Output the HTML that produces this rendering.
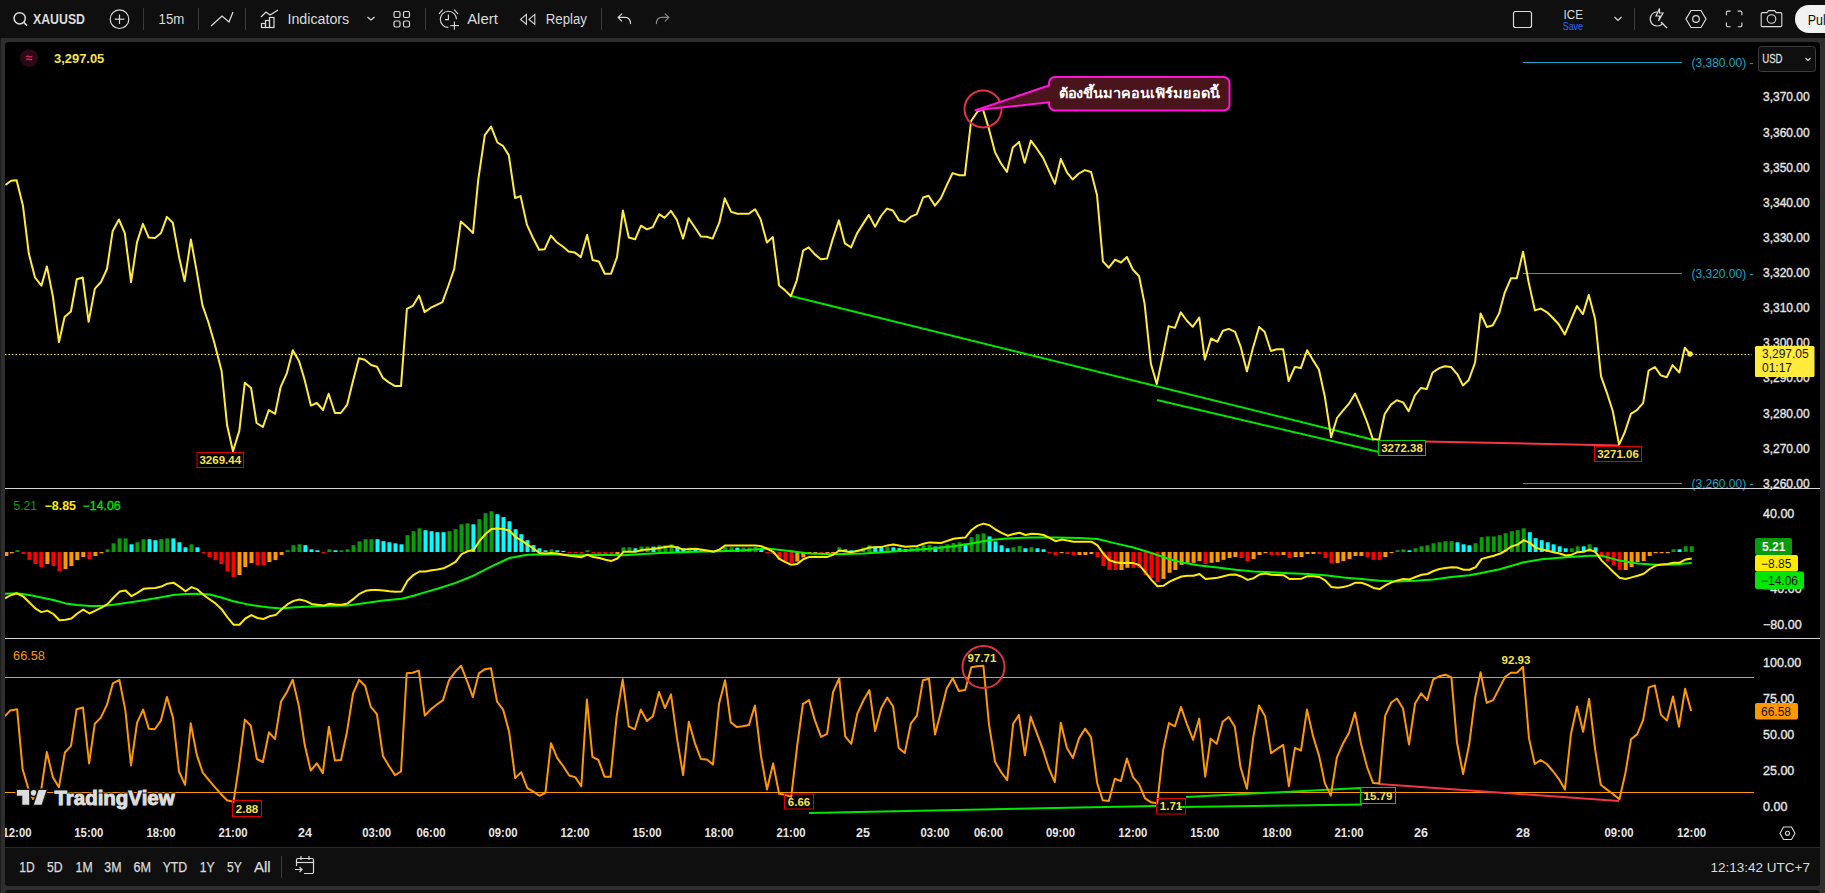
<!DOCTYPE html>
<html><head><meta charset="utf-8"><title>XAUUSD chart</title>
<style>
html,body{margin:0;padding:0;background:#2e2e2e;width:1825px;height:893px;overflow:hidden}
svg{display:block}
text{font-family:"Liberation Sans", sans-serif}
</style></head><body>
<svg width="1825" height="893" viewBox="0 0 1825 893">

<rect x="0" y="0" width="1825" height="893" fill="#2e2e2e"/>
<rect x="0" y="0" width="1825" height="38" fill="#0f0f0f"/>
<rect x="5" y="42" width="1815" height="844" rx="4" fill="#000"/>
<rect x="5" y="847" width="1815" height="39" rx="4" fill="#0f0f0f"/>
<rect x="5" y="847" width="1815" height="8" fill="#0f0f0f"/>
<line x1="5" y1="847.5" x2="1820" y2="847.5" stroke="#2a2a2a" stroke-width="1"/>
<rect x="5" y="890" width="1815" height="8" rx="4" fill="#0f0f0f"/>
<g fill="none" stroke="#dbdbdb" stroke-width="1.5"><circle cx="19.7" cy="18.3" r="5.6"/><line x1="23.8" y1="22.4" x2="27" y2="25.6"/></g>
<text x="33" y="24" font-size="14" font-weight="bold" fill="#dbdbdb" textLength="52" lengthAdjust="spacingAndGlyphs">XAUUSD</text>
<g fill="none" stroke="#dbdbdb" stroke-width="1.2"><circle cx="119.5" cy="19.2" r="9.3"/><line x1="119.5" y1="14.5" x2="119.5" y2="24"/><line x1="114.8" y1="19.2" x2="124.3" y2="19.2"/></g>
<line x1="143.5" y1="8" x2="143.5" y2="30" stroke="#3a3a3a" stroke-width="1"/>
<line x1="198.5" y1="8" x2="198.5" y2="30" stroke="#3a3a3a" stroke-width="1"/>
<line x1="245.5" y1="8" x2="245.5" y2="30" stroke="#3a3a3a" stroke-width="1"/>
<line x1="425.5" y1="8" x2="425.5" y2="30" stroke="#3a3a3a" stroke-width="1"/>
<line x1="601.5" y1="8" x2="601.5" y2="30" stroke="#3a3a3a" stroke-width="1"/>
<line x1="1634.5" y1="8" x2="1634.5" y2="30" stroke="#3a3a3a" stroke-width="1"/>
<text x="158.6" y="24.3" font-size="14" fill="#dbdbdb" textLength="25.8" lengthAdjust="spacingAndGlyphs">15m</text>
<polyline points="211,26 222,16 229,22 233,12" fill="none" stroke="#dbdbdb" stroke-width="1.3"/>
<g fill="none" stroke="#dbdbdb" stroke-width="1.2"><polyline points="261,17 266,12 270,15 278,10"/><rect x="261.5" y="23.5" width="4" height="4"/><rect x="265.5" y="20.5" width="4" height="7"/><rect x="269.5" y="17.5" width="4.5" height="10"/></g>
<text x="287.5" y="24.3" font-size="14" fill="#dbdbdb" textLength="61.7" lengthAdjust="spacingAndGlyphs">Indicators</text>
<polyline points="367.5,17 371,20 374.5,17" fill="none" stroke="#dbdbdb" stroke-width="1.2"/>
<g fill="none" stroke="#dbdbdb" stroke-width="1.2"><rect x="394" y="11.5" width="6" height="6" rx="1.5"/><rect x="403.5" y="11.5" width="6" height="6" rx="1.5"/><rect x="394" y="21" width="6" height="6" rx="1.5"/><rect x="403.5" y="21" width="6" height="6" rx="1.5"/></g>
<g fill="none" stroke="#dbdbdb" stroke-width="1.1"><path d="M456.5,19.3 A8.1,8.1 0 1 0 448.4,27.4"/><polyline points="448.4,14.5 448.4,19.6 445,19.6"/><line x1="439" y1="13.9" x2="442.7" y2="9.6"/><line x1="454.1" y1="9.6" x2="458" y2="13.9"/><line x1="454.4" y1="21.4" x2="454.4" y2="29.8"/><line x1="450.2" y1="25.6" x2="458.9" y2="25.6"/></g>
<text x="467.2" y="24.3" font-size="14" fill="#dbdbdb" textLength="30.6" lengthAdjust="spacingAndGlyphs">Alert</text>
<g fill="none" stroke="#dbdbdb" stroke-width="1.1"><polygon points="520.6,19.4 526.4,14.4 526.4,24.4"/><polygon points="529,19.4 534.8,14.4 534.8,24.4"/></g>
<text x="545.8" y="24.3" font-size="14" fill="#dbdbdb" textLength="41.2" lengthAdjust="spacingAndGlyphs">Replay</text>
<g fill="none" stroke="#dbdbdb" stroke-width="1.1" stroke-linecap="round"><path d="M618,17.4 L621.8,13.8 M618,17.4 L621.8,21.1 M618,17.4 H625 Q630.5,17.4 630.5,23.6"/></g>
<g fill="none" stroke="#8a8a8a" stroke-width="1.1" stroke-linecap="round"><path d="M668.9,17.4 L665.1,13.8 M668.9,17.4 L665.1,21.1 M668.9,17.4 H661.9 Q656.4,17.4 656.4,23.6"/></g>
<rect x="1513.5" y="11.5" width="18" height="16" rx="2" fill="none" stroke="#dbdbdb" stroke-width="1.2"/>
<text x="1563.6" y="19" font-size="13" fill="#dbdbdb" textLength="19.4" lengthAdjust="spacingAndGlyphs">ICE</text>
<text x="1562.7" y="30.3" font-size="10.5" fill="#2f6bff" textLength="20.3" lengthAdjust="spacingAndGlyphs">Save</text>
<polyline points="1614.5,17 1618,20.5 1621.5,17" fill="none" stroke="#dbdbdb" stroke-width="1.2"/>
<g fill="none" stroke="#dbdbdb" stroke-width="1.2"><path d="M1657,12 A7,7 0 1 0 1663,23"/><line x1="1661" y1="22" x2="1667" y2="28"/><path d="M1659.5,8.5 L1656,16 L1660,16 L1658.5,21 L1663,13 L1659.5,13 Z"/></g>
<g fill="none" stroke="#dbdbdb" stroke-width="1.2"><polygon points="1691,10.5 1701,10.5 1706,19 1701,27.5 1691,27.5 1686,19"/><circle cx="1696" cy="19" r="3.3"/></g>
<g fill="none" stroke="#dbdbdb" stroke-width="1.1"><path d="M1726.4,15.2 V12.6 A1.5,1.5 0 0 1 1727.9,11.1 H1730.6 M1737.7,11.1 H1740.4 A1.5,1.5 0 0 1 1741.9,12.6 V15.2 M1741.9,22.6 V25.2 A1.5,1.5 0 0 1 1740.4,26.7 H1737.7 M1730.6,26.7 H1727.9 A1.5,1.5 0 0 1 1726.4,25.2 V22.6"/></g>
<g fill="none" stroke="#dbdbdb" stroke-width="1.1"><path d="M1762.4,12.6 H1767 L1768.6,10.6 H1774.6 L1776.2,12.6 H1780.6 A1.2,1.2 0 0 1 1781.8,13.8 V25.4 A1.2,1.2 0 0 1 1780.6,26.6 H1762.4 A1.2,1.2 0 0 1 1761.2,25.4 V13.8 A1.2,1.2 0 0 1 1762.4,12.6 Z"/><circle cx="1771.5" cy="19" r="4.3"/></g>
<rect x="1795" y="5" width="60" height="28" rx="14" fill="#f2f2f2"/>
<text x="1807.7" y="24.5" font-size="14.5" fill="#0f0f0f" textLength="18" lengthAdjust="spacingAndGlyphs">Pul</text>
<circle cx="29" cy="58" r="9" fill="#2a0a16"/>
<text x="29" y="62" font-size="12" font-weight="bold" fill="#e91e63" text-anchor="middle">≈</text>
<text x="54" y="62.7" font-size="12" font-weight="bold" fill="#f6e34a" textLength="50.3" lengthAdjust="spacingAndGlyphs">3,297.05</text>
<line x1="1523" y1="62.5" x2="1682" y2="62.5" stroke="#17a8c4" stroke-width="1"/>
<text x="1691.5" y="67.0" font-size="12" fill="#17a8c4" textLength="62" lengthAdjust="spacingAndGlyphs">(3,380.00) -</text>
<line x1="1523" y1="273.5" x2="1682" y2="273.5" stroke="#17a8c4" stroke-width="1"/>
<text x="1691.5" y="278.0" font-size="12" fill="#17a8c4" textLength="62" lengthAdjust="spacingAndGlyphs">(3,320.00) -</text>
<line x1="1523" y1="483.5" x2="1682" y2="483.5" stroke="#17a8c4" stroke-width="1"/>
<text x="1691.5" y="488.0" font-size="12" fill="#17a8c4" textLength="62" lengthAdjust="spacingAndGlyphs">(3,260.00) -</text>
<line x1="5" y1="354.5" x2="1752" y2="354.5" stroke="#ffeb3b" stroke-width="1" stroke-dasharray="1.5,2"/>
<text x="1763" y="101.4" font-size="12.5" fill="#e6e6e6" stroke="#e6e6e6" stroke-width="0.35" textLength="46.6" lengthAdjust="spacingAndGlyphs">3,370.00</text>
<text x="1763" y="136.5" font-size="12.5" fill="#e6e6e6" stroke="#e6e6e6" stroke-width="0.35" textLength="46.6" lengthAdjust="spacingAndGlyphs">3,360.00</text>
<text x="1763" y="171.7" font-size="12.5" fill="#e6e6e6" stroke="#e6e6e6" stroke-width="0.35" textLength="46.6" lengthAdjust="spacingAndGlyphs">3,350.00</text>
<text x="1763" y="206.8" font-size="12.5" fill="#e6e6e6" stroke="#e6e6e6" stroke-width="0.35" textLength="46.6" lengthAdjust="spacingAndGlyphs">3,340.00</text>
<text x="1763" y="241.9" font-size="12.5" fill="#e6e6e6" stroke="#e6e6e6" stroke-width="0.35" textLength="46.6" lengthAdjust="spacingAndGlyphs">3,330.00</text>
<text x="1763" y="277.1" font-size="12.5" fill="#e6e6e6" stroke="#e6e6e6" stroke-width="0.35" textLength="46.6" lengthAdjust="spacingAndGlyphs">3,320.00</text>
<text x="1763" y="312.2" font-size="12.5" fill="#e6e6e6" stroke="#e6e6e6" stroke-width="0.35" textLength="46.6" lengthAdjust="spacingAndGlyphs">3,310.00</text>
<text x="1763" y="347.3" font-size="12.5" fill="#e6e6e6" stroke="#e6e6e6" stroke-width="0.35" textLength="46.6" lengthAdjust="spacingAndGlyphs">3,300.00</text>
<text x="1763" y="382.4" font-size="12.5" fill="#e6e6e6" stroke="#e6e6e6" stroke-width="0.35" textLength="46.6" lengthAdjust="spacingAndGlyphs">3,290.00</text>
<text x="1763" y="417.6" font-size="12.5" fill="#e6e6e6" stroke="#e6e6e6" stroke-width="0.35" textLength="46.6" lengthAdjust="spacingAndGlyphs">3,280.00</text>
<text x="1763" y="452.7" font-size="12.5" fill="#e6e6e6" stroke="#e6e6e6" stroke-width="0.35" textLength="46.6" lengthAdjust="spacingAndGlyphs">3,270.00</text>
<text x="1763" y="487.8" font-size="12.5" fill="#e6e6e6" stroke="#e6e6e6" stroke-width="0.35" textLength="46.6" lengthAdjust="spacingAndGlyphs">3,260.00</text>
<rect x="1758.5" y="46.5" width="57" height="25" rx="3" fill="#0f0f0f" stroke="#3c3c3c" stroke-width="1"/>
<text x="1762.2" y="63" font-size="12.5" fill="#dbdbdb" stroke="#dbdbdb" stroke-width="0.3" textLength="20.4" lengthAdjust="spacingAndGlyphs">USD</text>
<polyline points="1805.5,58 1808,60.5 1810.5,58" fill="none" stroke="#dbdbdb" stroke-width="1.1"/>
<line x1="791" y1="296" x2="1374" y2="440" stroke="#00e600" stroke-width="2"/>
<line x1="1157" y1="400" x2="1379" y2="452" stroke="#00e600" stroke-width="2"/>
<line x1="1425" y1="441.5" x2="1619" y2="445.5" stroke="#f23645" stroke-width="2"/>
<polyline points="5.5,185.0 11.0,180.7 16.6,180.3 22.9,205.4 28.8,253.5 35.0,277.5 41.4,285.6 46.9,266.4 52.8,296.0 59.0,342.0 64.6,317.0 70.9,311.5 76.8,279.3 82.7,277.5 88.6,321.8 94.9,288.6 100.8,282.3 107.0,269.0 112.6,231.3 118.9,219.5 124.8,233.1 131.1,282.0 137.0,242.4 142.9,223.9 148.8,237.6 155.0,238.0 161.0,233.0 166.9,216.9 172.8,222.8 179.1,257.2 184.6,281.2 190.9,239.4 196.8,271.9 202.4,305.2 208.3,322.0 214.2,342.2 221.6,371.0 227.1,425.3 233.0,451.2 239.3,430.9 244.8,382.7 251.1,388.0 256.6,423.0 262.9,427.0 268.8,410.0 275.1,413.8 280.6,387.2 286.9,373.1 292.8,350.2 299.1,361.3 304.6,379.8 310.9,405.6 316.8,403.0 323.1,410.0 328.6,393.8 334.9,413.0 340.8,413.0 347.1,404.9 352.6,382.4 358.9,358.3 364.8,359.8 371.1,365.0 377.0,366.8 382.9,377.9 388.8,382.4 395.1,386.1 401.0,386.1 406.9,308.8 412.8,305.9 419.1,295.5 424.6,312.1 430.9,307.7 436.8,304.8 442.4,302.2 448.3,286.0 454.2,268.9 460.8,221.6 467.0,227.0 473.0,233.1 478.2,180.2 484.8,135.1 491.1,126.6 497.4,142.5 502.9,145.8 508.8,155.1 515.1,198.0 520.6,196.1 526.9,224.6 532.8,237.5 539.1,249.7 544.6,249.3 550.9,235.6 556.8,242.3 563.1,246.7 568.6,251.5 574.9,252.6 580.8,257.1 587.1,234.9 592.6,260.0 598.9,261.5 604.8,273.7 611.1,273.7 617.0,257.1 622.9,210.5 628.8,237.5 635.1,239.3 641.0,225.7 646.9,229.4 652.8,227.1 659.1,214.2 664.6,217.9 670.9,210.9 676.8,219.8 683.1,238.6 688.6,218.3 694.9,227.5 700.8,236.4 706.7,236.8 712.6,238.6 719.3,222.7 724.8,198.3 731.1,211.9 737.4,213.8 742.9,213.8 748.8,213.8 755.1,209.3 760.6,219.3 766.9,242.6 772.8,237.1 779.1,285.5 784.6,289.9 790.9,296.2 796.8,280.3 803.1,250.7 808.6,247.4 814.9,254.4 820.8,259.2 827.1,258.5 832.6,239.6 838.9,220.4 844.8,243.3 851.1,247.4 857.0,233.4 862.9,224.1 868.8,214.9 875.1,226.7 881.0,216.0 886.9,208.6 892.8,210.5 899.1,220.4 904.6,221.9 910.9,216.7 916.8,214.1 923.1,197.5 928.6,195.7 934.9,205.6 940.8,198.3 946.7,185.3 952.6,173.1 959.3,175.3 964.8,175.3 971.1,121.0 977.4,111.7 982.9,109.2 988.8,128.4 995.1,152.4 1000.6,162.7 1006.9,172.0 1012.8,147.6 1019.1,142.0 1024.6,162.7 1030.9,140.6 1036.8,148.7 1043.1,157.9 1048.6,170.1 1054.9,183.8 1060.8,159.0 1067.1,172.7 1072.6,179.4 1078.9,173.5 1084.8,170.1 1091.1,172.0 1097.0,194.9 1102.9,261.4 1108.8,267.7 1115.1,259.6 1121.0,262.5 1126.9,257.0 1132.8,269.5 1139.1,276.2 1144.6,303.9 1150.9,363.8 1156.8,384.1 1163.1,353.8 1168.6,326.1 1174.9,327.9 1180.8,312.4 1186.7,320.5 1192.6,326.8 1199.3,317.6 1204.8,359.6 1211.1,338.5 1217.4,341.8 1222.9,330.7 1228.8,328.9 1235.1,331.8 1240.6,346.6 1246.9,371.4 1252.8,348.5 1259.1,327.0 1264.6,331.8 1270.9,351.0 1276.8,349.2 1283.1,349.2 1288.6,381.0 1294.9,367.0 1300.8,368.1 1307.1,350.3 1312.6,359.6 1318.9,369.5 1324.8,396.5 1331.1,437.2 1337.0,418.0 1342.9,410.6 1348.8,403.9 1355.1,393.6 1361.0,406.9 1366.9,421.6 1372.8,439.0 1379.1,439.7 1384.6,414.2 1390.9,404.6 1396.8,400.2 1403.1,402.4 1408.6,411.3 1414.9,395.4 1420.8,388.0 1426.7,389.1 1432.6,372.5 1439.3,368.1 1444.8,366.2 1451.1,367.0 1457.4,374.3 1462.9,385.4 1468.8,379.9 1475.1,362.5 1480.6,313.4 1486.9,327.0 1492.8,325.2 1499.1,313.4 1504.6,293.0 1510.9,278.3 1516.8,278.3 1523.1,251.6 1528.6,282.0 1534.9,310.4 1540.8,308.6 1547.1,312.3 1552.6,317.8 1558.9,324.5 1564.8,334.4 1571.1,319.6 1577.0,306.0 1582.9,314.1 1588.8,294.9 1595.1,318.9 1601.0,376.2 1606.9,392.8 1612.8,411.3 1619.1,444.6 1624.6,432.7 1630.9,413.9 1636.8,410.2 1643.1,403.2 1648.6,370.6 1654.9,367.0 1660.8,375.4 1666.7,377.3 1672.6,365.1 1679.3,372.5 1684.8,347.7 1690.0,354.0" fill="none" stroke="#ffeb3b" stroke-width="2" stroke-linejoin="round"/>
<circle cx="1690" cy="354" r="2.8" fill="#ffeb3b"/>
<rect x="197.0" y="452.5" width="46.5" height="15" fill="none" stroke="#e00000" stroke-width="1"/>
<text x="220.25" y="464.2" font-size="11.5" font-weight="bold" fill="#f6e34a" text-anchor="middle">3269.44</text>
<rect x="1378.5" y="440.5" width="47" height="15" fill="none" stroke="#00d000" stroke-width="1"/>
<text x="1402.0" y="452.2" font-size="11.5" font-weight="bold" fill="#f6e34a" text-anchor="middle">3272.38</text>
<rect x="1594.5" y="446.5" width="47" height="15" fill="none" stroke="#e00000" stroke-width="1"/>
<text x="1618.0" y="458.2" font-size="11.5" font-weight="bold" fill="#f6e34a" text-anchor="middle">3271.06</text>
<circle cx="983" cy="109" r="18.5" fill="none" stroke="#e2324a" stroke-width="2"/>
<path d="M1055,77 H1223.5 A6,6 0 0 1 1229.5,83 V104.5 A6,6 0 0 1 1223.5,110.5 H1055 A6,6 0 0 1 1049,104.5 V102.3 L975.5,110.3 L1049,85.5 V83 A6,6 0 0 1 1055,77 Z" fill="#4a141c" stroke="#ff14dc" stroke-width="2" stroke-linejoin="round"/>
<text x="1058.6" y="98" font-size="13" font-weight="bold" fill="#ffffff" textLength="161" lengthAdjust="spacingAndGlyphs">ต้องขึ้นมาคอนเฟิร์มยอดนี้</text>
<rect x="1755" y="346" width="59.5" height="31" rx="1.5" fill="#ffeb3b"/>
<text x="1762" y="358" font-size="12" fill="#131313">3,297.05</text>
<text x="1762" y="372" font-size="12" fill="#131313">01:17</text>
<line x1="5" y1="488.5" x2="1820" y2="488.5" stroke="#d6d6d6" stroke-width="1"/>
<line x1="5" y1="638.5" x2="1820" y2="638.5" stroke="#d6d6d6" stroke-width="1"/>
<text x="13.4" y="509.8" font-size="12" fill="#0c9c0c" textLength="23.6" lengthAdjust="spacingAndGlyphs">5.21</text>
<text x="44.5" y="509.8" font-size="12" font-weight="bold" fill="#ffeb00" textLength="31.5" lengthAdjust="spacingAndGlyphs">−8.85</text>
<text x="82.6" y="509.8" font-size="12" fill="#00e600" stroke="#00e600" stroke-width="0.3" textLength="38" lengthAdjust="spacingAndGlyphs">−14.06</text>
<rect x="4.4" y="552.0" width="4" height="4.0" fill="#ff9800"/>
<rect x="9.8" y="552.0" width="4" height="1.3" fill="#ff9800"/>
<rect x="15.5" y="550.2" width="4" height="1.8" fill="#089c08"/>
<rect x="21.5" y="552.0" width="4" height="2.0" fill="#ff0000"/>
<rect x="27.4" y="552.0" width="4" height="7.9" fill="#ff0000"/>
<rect x="33.3" y="552.0" width="4" height="12.1" fill="#ff0000"/>
<rect x="39.3" y="552.0" width="4" height="15.1" fill="#ff0000"/>
<rect x="45.4" y="552.0" width="4" height="12.1" fill="#ff9800"/>
<rect x="51.4" y="552.0" width="4" height="14.1" fill="#ff0000"/>
<rect x="57.5" y="552.0" width="4" height="19.2" fill="#ff0000"/>
<rect x="63.5" y="552.0" width="4" height="17.1" fill="#ff9800"/>
<rect x="69.4" y="552.0" width="4" height="14.1" fill="#ff9800"/>
<rect x="75.3" y="552.0" width="4" height="8.1" fill="#ff9800"/>
<rect x="81.3" y="552.0" width="4" height="5.0" fill="#ff9800"/>
<rect x="87.4" y="552.0" width="4" height="7.0" fill="#ff0000"/>
<rect x="93.4" y="552.0" width="4" height="4.0" fill="#ff9800"/>
<rect x="99.5" y="552.0" width="4" height="1.3" fill="#ff9800"/>
<rect x="105.5" y="549.3" width="4" height="2.7" fill="#089c08"/>
<rect x="111.6" y="543.3" width="4" height="8.7" fill="#089c08"/>
<rect x="117.6" y="538.4" width="4" height="13.6" fill="#089c08"/>
<rect x="123.6" y="538.4" width="4" height="13.6" fill="#089c08"/>
<rect x="129.5" y="544.3" width="4" height="7.7" fill="#00ffff"/>
<rect x="135.4" y="542.3" width="4" height="9.7" fill="#089c08"/>
<rect x="141.5" y="539.2" width="4" height="12.8" fill="#089c08"/>
<rect x="147.5" y="539.2" width="4" height="12.8" fill="#00ffff"/>
<rect x="153.4" y="540.2" width="4" height="11.8" fill="#00ffff"/>
<rect x="159.3" y="539.2" width="4" height="12.8" fill="#089c08"/>
<rect x="165.3" y="538.4" width="4" height="13.6" fill="#089c08"/>
<rect x="171.4" y="538.4" width="4" height="13.6" fill="#00ffff"/>
<rect x="177.4" y="542.3" width="4" height="9.7" fill="#00ffff"/>
<rect x="183.5" y="547.3" width="4" height="4.7" fill="#00ffff"/>
<rect x="189.5" y="544.3" width="4" height="7.7" fill="#089c08"/>
<rect x="195.5" y="547.3" width="4" height="4.7" fill="#00ffff"/>
<rect x="201.6" y="552.0" width="4" height="1.2" fill="#ff0000"/>
<rect x="207.5" y="552.0" width="4" height="5.0" fill="#ff0000"/>
<rect x="213.5" y="552.0" width="4" height="8.1" fill="#ff0000"/>
<rect x="219.4" y="552.0" width="4" height="12.1" fill="#ff0000"/>
<rect x="225.5" y="552.0" width="4" height="19.2" fill="#ff0000"/>
<rect x="231.5" y="552.0" width="4" height="25.0" fill="#ff0000"/>
<rect x="237.5" y="552.0" width="4" height="23.0" fill="#ff9800"/>
<rect x="243.3" y="552.0" width="4" height="15.1" fill="#ff9800"/>
<rect x="249.5" y="552.0" width="4" height="11.1" fill="#ff9800"/>
<rect x="255.5" y="552.0" width="4" height="13.1" fill="#ff0000"/>
<rect x="261.4" y="552.0" width="4" height="13.1" fill="#ff0000"/>
<rect x="267.4" y="552.0" width="4" height="10.1" fill="#ff9800"/>
<rect x="273.5" y="552.0" width="4" height="8.1" fill="#ff9800"/>
<rect x="279.6" y="552.0" width="4" height="3.0" fill="#ff9800"/>
<rect x="285.6" y="550.2" width="4" height="1.8" fill="#089c08"/>
<rect x="291.5" y="545.3" width="4" height="6.7" fill="#089c08"/>
<rect x="297.5" y="544.3" width="4" height="7.7" fill="#089c08"/>
<rect x="303.4" y="545.1" width="4" height="6.9" fill="#00ffff"/>
<rect x="309.5" y="549.3" width="4" height="2.7" fill="#00ffff"/>
<rect x="315.5" y="550.3" width="4" height="1.7" fill="#00ffff"/>
<rect x="321.6" y="552.0" width="4" height="1.2" fill="#ff0000"/>
<rect x="327.4" y="549.3" width="4" height="2.7" fill="#089c08"/>
<rect x="333.5" y="550.3" width="4" height="1.7" fill="#00ffff"/>
<rect x="339.5" y="550.3" width="4" height="1.7" fill="#089c08"/>
<rect x="345.6" y="549.3" width="4" height="2.7" fill="#089c08"/>
<rect x="351.5" y="545.1" width="4" height="6.9" fill="#089c08"/>
<rect x="357.5" y="541.4" width="4" height="10.6" fill="#089c08"/>
<rect x="363.6" y="539.2" width="4" height="12.8" fill="#089c08"/>
<rect x="369.4" y="539.2" width="4" height="12.8" fill="#089c08"/>
<rect x="375.5" y="539.2" width="4" height="12.8" fill="#00ffff"/>
<rect x="381.5" y="541.1" width="4" height="10.9" fill="#00ffff"/>
<rect x="387.4" y="542.3" width="4" height="9.7" fill="#00ffff"/>
<rect x="393.5" y="543.3" width="4" height="8.7" fill="#00ffff"/>
<rect x="399.5" y="544.3" width="4" height="7.7" fill="#00ffff"/>
<rect x="405.5" y="535.2" width="4" height="16.8" fill="#089c08"/>
<rect x="411.6" y="531.2" width="4" height="20.8" fill="#089c08"/>
<rect x="417.5" y="528.3" width="4" height="23.7" fill="#089c08"/>
<rect x="423.5" y="530.2" width="4" height="21.8" fill="#00ffff"/>
<rect x="429.6" y="531.2" width="4" height="20.8" fill="#00ffff"/>
<rect x="435.4" y="532.2" width="4" height="19.8" fill="#00ffff"/>
<rect x="441.5" y="532.2" width="4" height="19.8" fill="#00ffff"/>
<rect x="447.5" y="531.2" width="4" height="20.8" fill="#089c08"/>
<rect x="453.6" y="529.2" width="4" height="22.8" fill="#089c08"/>
<rect x="459.5" y="524.3" width="4" height="27.7" fill="#089c08"/>
<rect x="465.5" y="523.3" width="4" height="28.7" fill="#089c08"/>
<rect x="471.4" y="524.3" width="4" height="27.7" fill="#00ffff"/>
<rect x="477.4" y="519.2" width="4" height="32.8" fill="#089c08"/>
<rect x="483.5" y="513.2" width="4" height="38.8" fill="#089c08"/>
<rect x="489.5" y="511.2" width="4" height="40.8" fill="#089c08"/>
<rect x="495.4" y="514.2" width="4" height="37.8" fill="#00ffff"/>
<rect x="501.5" y="517.1" width="4" height="34.9" fill="#00ffff"/>
<rect x="507.5" y="521.3" width="4" height="30.7" fill="#00ffff"/>
<rect x="513.6" y="529.2" width="4" height="22.8" fill="#00ffff"/>
<rect x="519.4" y="534.2" width="4" height="17.8" fill="#00ffff"/>
<rect x="525.5" y="540.2" width="4" height="11.8" fill="#00ffff"/>
<rect x="531.5" y="545.1" width="4" height="6.9" fill="#00ffff"/>
<rect x="537.4" y="548.3" width="4" height="3.7" fill="#00ffff"/>
<rect x="543.5" y="550.3" width="4" height="1.7" fill="#00ffff"/>
<rect x="549.5" y="549.3" width="4" height="2.7" fill="#089c08"/>
<rect x="555.4" y="550.3" width="4" height="1.7" fill="#00ffff"/>
<rect x="561.4" y="550.8" width="4" height="1.2" fill="#00ffff"/>
<rect x="567.5" y="552.0" width="4" height="1.2" fill="#ff0000"/>
<rect x="573.5" y="552.0" width="4" height="1.2" fill="#ff0000"/>
<rect x="579.6" y="552.0" width="4" height="1.7" fill="#ff0000"/>
<rect x="585.5" y="550.3" width="4" height="1.7" fill="#089c08"/>
<rect x="591.4" y="552.0" width="4" height="1.3" fill="#ff0000"/>
<rect x="597.4" y="552.0" width="4" height="1.7" fill="#ff0000"/>
<rect x="603.5" y="552.0" width="4" height="2.3" fill="#ff0000"/>
<rect x="609.5" y="552.0" width="4" height="3.0" fill="#ff0000"/>
<rect x="615.4" y="552.0" width="4" height="2.0" fill="#ff9800"/>
<rect x="621.4" y="547.3" width="4" height="4.7" fill="#089c08"/>
<rect x="627.5" y="547.3" width="4" height="4.7" fill="#089c08"/>
<rect x="633.4" y="548.3" width="4" height="3.7" fill="#00ffff"/>
<rect x="639.4" y="546.5" width="4" height="5.5" fill="#089c08"/>
<rect x="645.5" y="546.5" width="4" height="5.5" fill="#089c08"/>
<rect x="651.5" y="546.6" width="4" height="5.4" fill="#00ffff"/>
<rect x="657.4" y="545.3" width="4" height="6.7" fill="#089c08"/>
<rect x="663.4" y="545.3" width="4" height="6.7" fill="#089c08"/>
<rect x="669.5" y="544.3" width="4" height="7.7" fill="#089c08"/>
<rect x="675.4" y="546.5" width="4" height="5.5" fill="#00ffff"/>
<rect x="681.4" y="548.3" width="4" height="3.7" fill="#00ffff"/>
<rect x="687.4" y="547.6" width="4" height="4.4" fill="#089c08"/>
<rect x="693.5" y="548.3" width="4" height="3.7" fill="#00ffff"/>
<rect x="699.4" y="550.3" width="4" height="1.7" fill="#00ffff"/>
<rect x="705.4" y="550.7" width="4" height="1.3" fill="#00ffff"/>
<rect x="711.5" y="550.8" width="4" height="1.2" fill="#00ffff"/>
<rect x="717.3" y="549.8" width="4" height="2.2" fill="#089c08"/>
<rect x="723.4" y="547.3" width="4" height="4.7" fill="#089c08"/>
<rect x="729.4" y="547.3" width="4" height="4.7" fill="#089c08"/>
<rect x="735.3" y="547.6" width="4" height="4.4" fill="#00ffff"/>
<rect x="741.4" y="547.6" width="4" height="4.4" fill="#089c08"/>
<rect x="747.4" y="547.6" width="4" height="4.4" fill="#089c08"/>
<rect x="753.5" y="547.0" width="4" height="5.0" fill="#089c08"/>
<rect x="759.3" y="548.1" width="4" height="3.9" fill="#00ffff"/>
<rect x="765.4" y="552.0" width="4" height="1.2" fill="#ff0000"/>
<rect x="771.3" y="552.0" width="4" height="2.0" fill="#ff0000"/>
<rect x="777.3" y="552.0" width="4" height="7.9" fill="#ff0000"/>
<rect x="783.4" y="552.0" width="4" height="9.6" fill="#ff0000"/>
<rect x="789.4" y="552.0" width="4" height="10.8" fill="#ff0000"/>
<rect x="795.3" y="552.0" width="4" height="9.6" fill="#ff9800"/>
<rect x="801.3" y="552.0" width="4" height="5.4" fill="#ff9800"/>
<rect x="807.4" y="552.0" width="4" height="1.7" fill="#ff9800"/>
<rect x="813.3" y="552.0" width="4" height="1.2" fill="#ff9800"/>
<rect x="819.3" y="552.0" width="4" height="1.2" fill="#ff0000"/>
<rect x="825.4" y="552.0" width="4" height="1.2" fill="#ff9800"/>
<rect x="831.2" y="552.0" width="4" height="1.2" fill="#ff9800"/>
<rect x="837.3" y="547.3" width="4" height="4.7" fill="#089c08"/>
<rect x="843.3" y="549.3" width="4" height="2.7" fill="#00ffff"/>
<rect x="849.4" y="550.3" width="4" height="1.7" fill="#00ffff"/>
<rect x="855.3" y="549.8" width="4" height="2.2" fill="#089c08"/>
<rect x="861.3" y="547.6" width="4" height="4.4" fill="#089c08"/>
<rect x="867.4" y="545.3" width="4" height="6.7" fill="#089c08"/>
<rect x="873.2" y="546.5" width="4" height="5.5" fill="#00ffff"/>
<rect x="879.3" y="547.3" width="4" height="4.7" fill="#00ffff"/>
<rect x="885.4" y="547.0" width="4" height="5.0" fill="#089c08"/>
<rect x="891.4" y="547.3" width="4" height="4.7" fill="#00ffff"/>
<rect x="897.4" y="548.1" width="4" height="3.9" fill="#00ffff"/>
<rect x="903.5" y="549.0" width="4" height="3.0" fill="#00ffff"/>
<rect x="909.5" y="548.1" width="4" height="3.9" fill="#089c08"/>
<rect x="915.4" y="547.0" width="4" height="5.0" fill="#089c08"/>
<rect x="921.5" y="545.3" width="4" height="6.7" fill="#089c08"/>
<rect x="927.5" y="544.9" width="4" height="7.1" fill="#089c08"/>
<rect x="933.4" y="546.5" width="4" height="5.5" fill="#00ffff"/>
<rect x="939.4" y="545.6" width="4" height="6.4" fill="#089c08"/>
<rect x="945.5" y="544.3" width="4" height="7.7" fill="#089c08"/>
<rect x="951.5" y="543.1" width="4" height="8.9" fill="#089c08"/>
<rect x="957.6" y="542.3" width="4" height="9.7" fill="#089c08"/>
<rect x="963.5" y="543.6" width="4" height="8.4" fill="#00ffff"/>
<rect x="969.5" y="537.2" width="4" height="14.8" fill="#089c08"/>
<rect x="975.6" y="534.2" width="4" height="17.8" fill="#089c08"/>
<rect x="981.6" y="533.4" width="4" height="18.6" fill="#089c08"/>
<rect x="987.5" y="536.4" width="4" height="15.6" fill="#00ffff"/>
<rect x="993.5" y="541.4" width="4" height="10.6" fill="#00ffff"/>
<rect x="999.6" y="545.3" width="4" height="6.7" fill="#00ffff"/>
<rect x="1005.6" y="548.3" width="4" height="3.7" fill="#00ffff"/>
<rect x="1011.5" y="547.3" width="4" height="4.7" fill="#089c08"/>
<rect x="1017.6" y="546.1" width="4" height="5.9" fill="#089c08"/>
<rect x="1023.4" y="548.3" width="4" height="3.7" fill="#00ffff"/>
<rect x="1029.5" y="547.3" width="4" height="4.7" fill="#089c08"/>
<rect x="1035.5" y="548.3" width="4" height="3.7" fill="#00ffff"/>
<rect x="1041.6" y="549.3" width="4" height="2.7" fill="#00ffff"/>
<rect x="1047.5" y="552.0" width="4" height="1.2" fill="#ff0000"/>
<rect x="1053.5" y="552.0" width="4" height="3.0" fill="#ff0000"/>
<rect x="1059.6" y="552.0" width="4" height="1.2" fill="#ff9800"/>
<rect x="1065.4" y="552.0" width="4" height="2.0" fill="#ff0000"/>
<rect x="1071.5" y="552.0" width="4" height="3.0" fill="#ff0000"/>
<rect x="1077.5" y="552.0" width="4" height="3.0" fill="#ff9800"/>
<rect x="1083.4" y="552.0" width="4" height="3.0" fill="#ff9800"/>
<rect x="1089.4" y="552.0" width="4" height="2.0" fill="#ff9800"/>
<rect x="1095.5" y="552.0" width="4" height="5.0" fill="#ff0000"/>
<rect x="1101.4" y="552.0" width="4" height="14.1" fill="#ff0000"/>
<rect x="1107.4" y="552.0" width="4" height="18.0" fill="#ff0000"/>
<rect x="1113.5" y="552.0" width="4" height="18.0" fill="#ff0000"/>
<rect x="1119.5" y="552.0" width="4" height="18.0" fill="#ff9800"/>
<rect x="1125.4" y="552.0" width="4" height="15.8" fill="#ff9800"/>
<rect x="1131.4" y="552.0" width="4" height="15.8" fill="#ff0000"/>
<rect x="1137.5" y="552.0" width="4" height="16.0" fill="#ff0000"/>
<rect x="1143.5" y="552.0" width="4" height="23.0" fill="#ff0000"/>
<rect x="1149.4" y="552.0" width="4" height="25.9" fill="#ff0000"/>
<rect x="1155.5" y="552.0" width="4" height="29.9" fill="#ff0000"/>
<rect x="1161.5" y="552.0" width="4" height="26.9" fill="#ff9800"/>
<rect x="1167.6" y="552.0" width="4" height="20.8" fill="#ff9800"/>
<rect x="1173.4" y="552.0" width="4" height="18.0" fill="#ff9800"/>
<rect x="1179.6" y="552.0" width="4" height="12.9" fill="#ff9800"/>
<rect x="1185.6" y="552.0" width="4" height="10.8" fill="#ff9800"/>
<rect x="1191.6" y="552.0" width="4" height="10.8" fill="#ff9800"/>
<rect x="1197.5" y="552.0" width="4" height="9.1" fill="#ff9800"/>
<rect x="1203.5" y="552.0" width="4" height="12.1" fill="#ff0000"/>
<rect x="1209.6" y="552.0" width="4" height="10.8" fill="#ff9800"/>
<rect x="1215.6" y="552.0" width="4" height="10.1" fill="#ff9800"/>
<rect x="1221.5" y="552.0" width="4" height="7.9" fill="#ff9800"/>
<rect x="1227.6" y="552.0" width="4" height="6.0" fill="#ff9800"/>
<rect x="1233.4" y="552.0" width="4" height="5.0" fill="#ff9800"/>
<rect x="1239.5" y="552.0" width="4" height="6.0" fill="#ff0000"/>
<rect x="1245.5" y="552.0" width="4" height="9.1" fill="#ff0000"/>
<rect x="1251.6" y="552.0" width="4" height="7.1" fill="#ff9800"/>
<rect x="1257.5" y="552.0" width="4" height="3.0" fill="#ff9800"/>
<rect x="1263.5" y="552.0" width="4" height="1.2" fill="#ff9800"/>
<rect x="1269.5" y="552.0" width="4" height="3.0" fill="#ff0000"/>
<rect x="1275.4" y="552.0" width="4" height="3.0" fill="#ff0000"/>
<rect x="1281.5" y="552.0" width="4" height="3.0" fill="#ff9800"/>
<rect x="1287.5" y="552.0" width="4" height="6.0" fill="#ff0000"/>
<rect x="1293.6" y="552.0" width="4" height="5.0" fill="#ff9800"/>
<rect x="1299.5" y="552.0" width="4" height="5.0" fill="#ff9800"/>
<rect x="1305.5" y="552.0" width="4" height="2.0" fill="#ff9800"/>
<rect x="1311.5" y="552.0" width="4" height="2.0" fill="#ff9800"/>
<rect x="1317.4" y="552.0" width="4" height="2.0" fill="#ff0000"/>
<rect x="1323.5" y="552.0" width="4" height="6.0" fill="#ff0000"/>
<rect x="1329.5" y="552.0" width="4" height="11.1" fill="#ff0000"/>
<rect x="1335.6" y="552.0" width="4" height="11.1" fill="#ff9800"/>
<rect x="1341.4" y="552.0" width="4" height="9.1" fill="#ff9800"/>
<rect x="1347.5" y="552.0" width="4" height="7.1" fill="#ff9800"/>
<rect x="1353.5" y="552.0" width="4" height="4.0" fill="#ff9800"/>
<rect x="1359.4" y="552.0" width="4" height="4.0" fill="#ff9800"/>
<rect x="1365.5" y="552.0" width="4" height="5.0" fill="#ff0000"/>
<rect x="1371.5" y="552.0" width="4" height="7.9" fill="#ff0000"/>
<rect x="1377.6" y="552.0" width="4" height="7.9" fill="#ff0000"/>
<rect x="1383.4" y="552.0" width="4" height="5.0" fill="#ff9800"/>
<rect x="1389.5" y="552.0" width="4" height="1.2" fill="#ff9800"/>
<rect x="1395.5" y="550.3" width="4" height="1.7" fill="#089c08"/>
<rect x="1401.4" y="549.3" width="4" height="2.7" fill="#089c08"/>
<rect x="1407.5" y="550.3" width="4" height="1.7" fill="#00ffff"/>
<rect x="1413.5" y="548.3" width="4" height="3.7" fill="#089c08"/>
<rect x="1419.6" y="546.3" width="4" height="5.7" fill="#089c08"/>
<rect x="1425.4" y="545.3" width="4" height="6.7" fill="#089c08"/>
<rect x="1431.5" y="543.3" width="4" height="8.7" fill="#089c08"/>
<rect x="1437.5" y="542.3" width="4" height="9.7" fill="#089c08"/>
<rect x="1443.4" y="541.2" width="4" height="10.8" fill="#089c08"/>
<rect x="1449.5" y="541.2" width="4" height="10.8" fill="#089c08"/>
<rect x="1455.5" y="542.3" width="4" height="9.7" fill="#00ffff"/>
<rect x="1461.6" y="544.3" width="4" height="7.7" fill="#00ffff"/>
<rect x="1467.4" y="545.3" width="4" height="6.7" fill="#00ffff"/>
<rect x="1473.5" y="543.3" width="4" height="8.7" fill="#089c08"/>
<rect x="1479.7" y="537.2" width="4" height="14.8" fill="#089c08"/>
<rect x="1485.8" y="536.4" width="4" height="15.6" fill="#089c08"/>
<rect x="1491.8" y="536.4" width="4" height="15.6" fill="#089c08"/>
<rect x="1497.7" y="535.2" width="4" height="16.8" fill="#089c08"/>
<rect x="1503.7" y="533.2" width="4" height="18.8" fill="#089c08"/>
<rect x="1509.8" y="531.2" width="4" height="20.8" fill="#089c08"/>
<rect x="1515.7" y="530.2" width="4" height="21.8" fill="#089c08"/>
<rect x="1521.7" y="528.3" width="4" height="23.7" fill="#089c08"/>
<rect x="1527.8" y="532.2" width="4" height="19.8" fill="#00ffff"/>
<rect x="1533.6" y="538.2" width="4" height="13.8" fill="#00ffff"/>
<rect x="1539.7" y="540.2" width="4" height="11.8" fill="#00ffff"/>
<rect x="1545.7" y="542.3" width="4" height="9.7" fill="#00ffff"/>
<rect x="1551.6" y="544.3" width="4" height="7.7" fill="#00ffff"/>
<rect x="1557.7" y="546.3" width="4" height="5.7" fill="#00ffff"/>
<rect x="1563.7" y="548.3" width="4" height="3.7" fill="#00ffff"/>
<rect x="1569.8" y="548.3" width="4" height="3.7" fill="#089c08"/>
<rect x="1575.6" y="546.3" width="4" height="5.7" fill="#089c08"/>
<rect x="1581.7" y="546.3" width="4" height="5.7" fill="#00ffff"/>
<rect x="1587.6" y="544.3" width="4" height="7.7" fill="#089c08"/>
<rect x="1593.6" y="547.3" width="4" height="4.7" fill="#00ffff"/>
<rect x="1599.7" y="552.0" width="4" height="3.0" fill="#ff0000"/>
<rect x="1605.7" y="552.0" width="4" height="9.1" fill="#ff0000"/>
<rect x="1611.6" y="552.0" width="4" height="13.1" fill="#ff0000"/>
<rect x="1617.6" y="552.0" width="4" height="18.0" fill="#ff0000"/>
<rect x="1623.7" y="552.0" width="4" height="18.0" fill="#ff9800"/>
<rect x="1629.6" y="552.0" width="4" height="15.1" fill="#ff9800"/>
<rect x="1635.6" y="552.0" width="4" height="10.1" fill="#ff9800"/>
<rect x="1641.7" y="552.0" width="4" height="9.1" fill="#ff9800"/>
<rect x="1647.7" y="552.0" width="4" height="4.0" fill="#ff9800"/>
<rect x="1653.6" y="552.0" width="4" height="1.2" fill="#ff9800"/>
<rect x="1659.6" y="552.0" width="4" height="1.2" fill="#ff9800"/>
<rect x="1665.7" y="552.0" width="4" height="1.2" fill="#ff9800"/>
<rect x="1671.6" y="549.3" width="4" height="2.7" fill="#089c08"/>
<rect x="1677.6" y="549.3" width="4" height="2.7" fill="#00ffff"/>
<rect x="1683.7" y="546.3" width="4" height="5.7" fill="#089c08"/>
<rect x="1689.7" y="546.3" width="4" height="5.7" fill="#089c08"/>
<polyline points="5.0,593.8 16.8,593.3 29.4,595.0 41.3,597.5 53.4,600.0 65.5,603.4 77.3,605.1 89.4,605.9 101.5,605.9 113.6,604.7 125.6,602.9 137.4,601.2 149.5,599.2 161.3,597.2 173.4,595.0 185.5,594.1 197.5,593.8 209.5,594.5 221.4,597.5 233.5,601.2 245.3,603.9 257.5,605.9 269.4,607.6 281.6,608.4 295.0,607.2 323.6,605.9 347.6,605.6 365.6,603.0 383.5,600.5 401.5,598.7 413.6,595.8 425.5,592.1 437.4,588.8 455.6,582.9 473.4,575.7 491.5,566.4 509.5,558.0 527.5,554.8 545.5,554.2 563.4,554.7 581.6,555.2 595.0,554.7 623.4,555.2 659.4,553.0 695.5,551.8 737.3,550.8 767.4,548.5 791.4,551.3 809.4,553.5 833.2,554.2 863.3,553.5 890.0,551.8 905.5,550.5 929.5,548.8 953.5,546.3 971.5,543.4 989.5,540.1 1007.6,538.4 1031.5,537.4 1055.5,537.4 1079.5,537.9 1097.5,539.0 1115.5,543.4 1133.4,547.5 1151.4,553.0 1169.6,559.2 1185.0,563.1 1199.5,565.6 1217.6,567.6 1235.4,569.8 1253.6,571.5 1271.5,572.3 1289.5,573.2 1307.5,574.0 1325.5,575.3 1343.4,577.4 1361.4,579.0 1379.6,580.7 1397.5,581.6 1415.5,580.7 1433.5,579.4 1451.5,577.0 1469.4,575.3 1480.0,573.2 1499.7,569.3 1523.7,562.2 1541.7,559.2 1565.7,557.2 1589.6,555.8 1601.7,555.8 1619.6,560.6 1637.6,563.6 1655.6,564.8 1673.6,564.4 1691.7,563.1" fill="none" stroke="#00f200" stroke-width="2" stroke-linejoin="round"/>
<polyline points="5.0,598.3 10.0,595.5 16.8,593.3 23.5,596.7 29.4,602.5 35.3,608.4 41.3,612.1 47.4,610.6 53.4,614.0 59.5,620.2 65.5,619.7 71.4,618.5 77.3,613.5 83.3,609.6 89.4,613.5 95.4,610.6 101.5,607.6 107.5,604.2 113.6,597.5 119.6,591.6 125.6,590.5 131.5,596.2 137.4,592.8 143.5,588.8 149.5,588.3 155.4,587.9 161.3,586.6 167.3,583.7 173.4,582.7 179.4,586.6 185.5,591.3 191.5,587.1 197.5,589.4 203.6,595.0 209.5,599.2 215.5,603.4 221.4,608.9 227.5,617.3 233.5,624.7 239.5,624.7 245.3,618.5 251.5,615.1 257.5,618.0 263.4,619.0 269.4,616.3 275.5,615.1 281.6,609.3 287.6,604.2 293.5,600.9 299.5,599.5 305.4,600.9 311.5,603.9 317.5,604.7 323.6,605.6 329.4,603.7 335.5,604.6 341.5,604.7 347.6,603.4 353.5,598.9 359.5,593.8 365.6,590.8 371.4,590.0 377.5,590.0 383.5,590.5 389.4,591.3 395.5,591.8 401.5,591.6 407.5,580.7 413.6,574.8 419.5,571.5 425.5,571.5 431.6,570.3 437.4,569.5 443.5,568.3 449.5,565.3 455.6,561.9 461.5,554.2 467.5,551.3 473.4,550.1 479.4,541.2 485.5,534.0 491.5,529.0 497.4,528.6 503.5,529.0 509.5,530.7 515.6,537.0 521.4,540.4 527.5,544.6 533.5,548.5 539.4,553.0 545.5,553.5 551.5,553.0 557.4,553.5 563.4,554.7 569.5,555.8 575.5,556.4 581.6,557.2 587.5,554.7 593.4,557.0 599.4,558.0 605.5,559.7 611.5,560.9 617.4,558.5 623.4,551.8 635.4,551.8 641.4,550.1 653.5,549.1 665.4,547.1 671.5,546.3 677.4,547.5 683.4,549.6 695.5,548.8 707.4,550.5 713.5,551.8 719.3,549.6 725.4,545.4 737.3,545.4 755.5,545.4 761.3,546.3 767.4,548.8 773.3,551.8 779.3,558.9 785.4,562.2 791.4,564.8 797.3,563.9 803.3,559.2 809.4,556.9 827.4,556.9 833.2,554.7 839.3,550.5 851.4,552.2 863.3,549.6 869.4,547.5 881.3,547.1 887.4,545.4 893.4,544.6 905.5,546.8 917.4,545.9 923.5,543.8 929.5,542.4 941.4,542.9 953.5,538.7 959.6,537.9 965.5,537.4 971.5,530.0 977.6,525.6 983.6,523.6 989.5,525.3 995.5,529.5 1001.6,532.8 1007.6,535.7 1013.5,534.0 1019.6,532.8 1025.4,535.0 1031.5,533.7 1037.5,534.0 1043.6,535.0 1049.5,537.9 1055.5,541.2 1061.6,539.6 1067.4,540.4 1073.5,541.7 1085.4,541.7 1091.4,541.7 1097.5,545.4 1103.4,553.8 1109.4,560.2 1115.5,562.2 1121.5,563.1 1133.4,563.1 1139.5,565.3 1145.5,572.3 1151.4,579.9 1157.5,586.3 1163.5,585.8 1169.6,581.6 1175.4,579.0 1181.6,576.5 1187.6,575.7 1193.6,575.7 1199.5,574.0 1205.5,579.0 1217.6,577.7 1229.6,574.8 1235.4,574.5 1241.5,576.5 1247.5,579.9 1253.6,578.2 1259.5,574.5 1265.5,573.5 1271.5,574.8 1283.5,575.2 1289.5,579.0 1301.5,578.7 1307.5,576.2 1313.5,576.2 1319.4,577.0 1325.5,580.7 1331.5,587.1 1337.6,587.8 1343.4,587.1 1349.5,585.4 1355.5,582.7 1361.4,582.7 1367.5,584.9 1373.5,587.9 1379.6,589.1 1385.4,585.4 1391.5,582.4 1397.5,580.4 1403.4,579.0 1409.5,579.4 1415.5,577.0 1421.6,574.8 1427.4,574.0 1433.5,571.0 1439.5,569.0 1445.4,568.1 1451.5,567.3 1457.5,567.6 1463.6,569.8 1469.4,569.8 1475.5,567.3 1481.7,558.9 1487.8,557.2 1493.8,555.8 1499.7,553.8 1505.7,550.5 1511.8,546.3 1517.7,544.6 1523.7,540.1 1529.8,542.9 1535.6,547.6 1541.7,549.6 1547.7,550.8 1553.6,552.2 1559.7,553.5 1565.7,555.5 1571.8,554.7 1577.6,552.2 1583.7,551.8 1589.6,549.6 1595.6,552.2 1601.7,560.6 1607.7,566.4 1613.6,572.3 1619.6,577.7 1625.7,579.0 1631.6,577.4 1637.6,575.7 1643.7,573.7 1649.7,569.0 1655.6,565.6 1661.6,564.4 1667.7,563.9 1673.6,562.7 1679.6,562.7 1685.7,559.4 1691.7,558.5" fill="none" stroke="#ffeb00" stroke-width="2" stroke-linejoin="round"/>
<text x="1763" y="518.3" font-size="12.5" fill="#e6e6e6" stroke="#e6e6e6" stroke-width="0.35">40.00</text>
<text x="1763" y="593.0" font-size="12.5" fill="#e6e6e6" stroke="#e6e6e6" stroke-width="0.35">−40.00</text>
<text x="1763" y="629.3" font-size="12.5" fill="#e6e6e6" stroke="#e6e6e6" stroke-width="0.35">−80.00</text>
<rect x="1755" y="538" width="37" height="17" rx="2" fill="#089c08"/>
<text x="1762" y="551" font-size="12" font-weight="bold" fill="#ffffff">5.21</text>
<rect x="1755" y="555" width="43" height="16.5" rx="2" fill="#ffeb00"/>
<text x="1761" y="568" font-size="12" fill="#111">−8.85</text>
<rect x="1755" y="571.5" width="49" height="17.5" rx="2" fill="#00e600"/>
<text x="1761" y="585" font-size="12" fill="#111">−14.06</text>
<text x="13.1" y="660.2" font-size="12" fill="#ff9800" textLength="31.7" lengthAdjust="spacingAndGlyphs">66.58</text>
<line x1="5" y1="677.5" x2="1754" y2="677.5" stroke="#ff9800" stroke-width="1"/>
<line x1="5" y1="792.5" x2="1754" y2="792.5" stroke="#ff9800" stroke-width="1"/>
<text x="1763" y="666.5" font-size="12.5" fill="#e6e6e6" stroke="#e6e6e6" stroke-width="0.35">100.00</text>
<text x="1763" y="702.5" font-size="12.5" fill="#e6e6e6" stroke="#e6e6e6" stroke-width="0.35">75.00</text>
<text x="1763" y="738.5" font-size="12.5" fill="#e6e6e6" stroke="#e6e6e6" stroke-width="0.35">50.00</text>
<text x="1763" y="774.5" font-size="12.5" fill="#e6e6e6" stroke="#e6e6e6" stroke-width="0.35">25.00</text>
<text x="1763" y="810.5" font-size="12.5" fill="#e6e6e6" stroke="#e6e6e6" stroke-width="0.35">0.00</text>
<rect x="1755" y="703" width="43" height="16.5" rx="2" fill="#ff9800"/>
<text x="1761" y="715.5" font-size="12" fill="#111">66.58</text>
<line x1="809" y1="813" x2="1156" y2="806" stroke="#00e600" stroke-width="2"/>
<line x1="1186" y1="797" x2="1361" y2="788" stroke="#00e600" stroke-width="2"/>
<line x1="1180" y1="807" x2="1362" y2="804.5" stroke="#00e600" stroke-width="2"/>
<line x1="1379" y1="784" x2="1619" y2="801" stroke="#f23645" stroke-width="2"/>
<polyline points="5.0,716.2 10.1,710.6 17.1,709.2 22.6,769.0 28.2,788.2 33.0,799.0 41.3,789.2 46.8,752.0 52.8,777.0 58.9,787.2 64.9,752.5 71.0,745.8 76.6,709.2 83.0,707.5 89.1,763.4 94.8,723.7 100.8,717.6 106.9,704.9 112.9,683.3 119.4,679.9 125.4,710.6 131.0,765.4 137.1,722.7 143.1,709.6 148.8,728.7 154.8,729.3 160.9,720.6 166.9,696.9 173.0,717.6 179.0,771.5 185.1,784.8 190.7,723.3 196.8,754.9 202.8,772.7 208.9,780.1 214.9,787.2 221.0,794.2 227.0,800.3 233.5,801.9 239.1,765.0 244.8,719.6 250.8,725.7 256.9,759.0 262.9,762.0 269.0,732.3 275.0,739.2 281.0,701.5 286.7,692.4 292.7,679.7 299.0,706.5 304.7,744.8 310.7,770.6 316.8,763.4 322.8,773.1 328.9,726.7 334.9,760.6 341.0,760.0 347.0,731.7 353.1,693.4 359.1,679.9 365.2,686.0 370.8,706.9 376.9,714.2 382.9,755.9 389.0,766.0 395.0,775.1 401.0,771.5 406.7,673.3 412.7,672.7 418.8,670.6 424.8,715.6 430.9,709.2 436.9,704.5 443.0,700.1 449.0,680.3 455.1,671.9 461.1,665.8 467.2,681.3 472.8,697.1 478.9,673.3 484.9,669.2 491.0,668.2 497.0,701.5 503.1,709.6 509.1,731.7 515.2,778.1 521.2,772.1 527.3,788.2 533.3,791.6 539.4,795.8 545.4,792.8 551.0,743.2 557.1,757.9 563.1,766.0 569.2,775.5 575.2,777.1 581.3,786.2 586.9,699.5 592.4,756.9 598.5,760.0 604.5,776.7 610.6,776.7 616.6,716.6 622.7,679.3 628.7,726.3 634.8,729.3 640.8,709.6 646.9,721.0 652.9,716.2 659.0,692.0 665.0,708.1 671.0,694.4 677.1,738.8 683.1,775.1 688.8,721.7 694.8,742.8 700.9,759.0 706.9,759.4 713.0,764.6 719.0,704.1 725.1,680.3 730.7,722.3 736.8,727.1 742.8,726.3 748.9,725.1 754.9,705.5 761.0,755.9 767.0,789.6 773.1,763.4 779.1,793.8 785.2,794.8 791.2,796.9 797.3,744.8 802.9,704.1 809.0,700.1 815.0,720.6 821.0,736.8 827.1,733.8 833.1,692.0 839.2,678.3 845.2,736.4 851.3,743.8 857.3,713.6 863.4,700.5 869.4,690.0 875.1,731.1 881.1,708.5 887.2,697.5 893.1,706.5 898.7,747.9 904.8,752.9 910.8,723.7 916.9,715.6 922.9,680.3 929.0,678.7 935.0,734.4 941.0,711.6 946.7,688.4 952.7,678.3 958.8,691.0 965.2,690.0 971.3,667.2 977.3,666.2 983.4,665.8 989.0,724.3 995.1,762.0 1001.1,772.1 1007.2,780.1 1013.2,723.7 1018.9,715.0 1024.9,755.3 1030.6,716.6 1036.6,732.7 1042.7,748.9 1048.7,768.0 1054.8,782.1 1060.8,722.7 1066.9,747.9 1072.9,757.9 1079.0,738.4 1085.0,728.7 1091.0,737.2 1097.1,782.7 1102.7,800.3 1108.8,800.9 1114.8,778.7 1120.9,781.1 1126.9,758.5 1133.0,777.1 1139.0,784.2 1145.1,798.3 1151.1,802.3 1157.2,803.3 1163.2,749.9 1168.9,723.1 1174.9,726.3 1181.0,706.9 1187.1,724.7 1193.1,739.8 1199.2,718.6 1205.2,776.7 1210.6,738.8 1216.7,743.8 1222.7,721.7 1228.8,717.0 1234.8,726.7 1240.5,767.0 1246.9,788.8 1253.0,738.8 1259.0,705.5 1265.1,716.2 1271.1,753.3 1277.2,748.9 1283.2,744.8 1288.9,786.2 1294.9,747.9 1301.0,750.5 1307.0,709.6 1313.1,736.4 1319.1,755.9 1324.8,783.1 1330.8,795.6 1336.9,757.3 1342.9,743.8 1349.0,732.7 1355.0,712.6 1361.0,743.8 1367.1,767.0 1373.1,783.1 1379.2,783.5 1385.2,715.6 1391.3,702.5 1396.9,698.5 1403.0,708.5 1409.0,744.4 1415.1,703.5 1421.1,693.4 1427.2,700.1 1433.2,679.3 1439.3,676.3 1445.3,674.7 1451.4,677.3 1457.0,742.8 1463.1,774.1 1469.1,744.8 1475.2,697.5 1480.6,672.3 1486.7,702.9 1493.1,700.1 1499.2,688.4 1505.2,676.7 1510.9,672.7 1516.9,672.7 1523.0,666.8 1529.0,738.4 1534.7,764.0 1540.7,760.0 1546.8,764.0 1552.8,771.0 1558.9,779.1 1564.9,789.6 1571.0,733.8 1577.0,706.5 1583.1,731.7 1589.1,698.9 1595.2,749.9 1600.8,784.8 1606.9,789.6 1613.3,794.2 1619.4,799.3 1625.4,773.1 1631.0,739.2 1637.1,734.4 1643.1,720.2 1648.8,687.4 1654.8,685.4 1660.9,714.6 1666.9,720.6 1673.0,696.5 1679.0,726.7 1685.1,688.8 1691.1,711.0" fill="none" stroke="#ff9800" stroke-width="2" stroke-linejoin="round"/>
<rect x="232.5" y="800.5" width="29" height="16" fill="none" stroke="#e00000" stroke-width="1"/>
<text x="247.0" y="812.7" font-size="11.5" font-weight="bold" fill="#f6e34a" text-anchor="middle">2.88</text>
<rect x="784.5" y="794.0" width="29" height="15.0" fill="none" stroke="#e00000" stroke-width="1"/>
<text x="799.0" y="805.7" font-size="11.5" font-weight="bold" fill="#f6e34a" text-anchor="middle">6.66</text>
<rect x="1156.5" y="798.5" width="29" height="15.5" fill="none" stroke="#e00000" stroke-width="1"/>
<text x="1171.0" y="810.45" font-size="11.5" font-weight="bold" fill="#f6e34a" text-anchor="middle">1.71</text>
<rect x="1360.5" y="787.5" width="35" height="16" fill="none" stroke="#00d000" stroke-width="1"/>
<text x="1378" y="800" font-size="11.5" font-weight="bold" fill="#f6e34a" text-anchor="middle">15.79</text>
<circle cx="983.5" cy="667" r="21" fill="none" stroke="#e2324a" stroke-width="2"/>
<text x="982" y="662" font-size="11.5" font-weight="bold" fill="#f6e34a" text-anchor="middle">97.71</text>
<text x="1516" y="664" font-size="11.5" font-weight="bold" fill="#f6e34a" text-anchor="middle">92.93</text>
<g fill="#dcdcdc" stroke="#111" stroke-width="3" paint-order="stroke" stroke-linejoin="round"><path d="M16.9,789.9 H29.2 V804.7 H22.3 V795.8 H16.9 Z"/><circle cx="33.7" cy="792.8" r="2.9"/><path d="M38.6,789.9 H46.5 L41.6,804.7 H33.9 Z"/><text x="54.4" y="804.7" font-size="20.5" font-weight="bold" textLength="120.3" lengthAdjust="spacingAndGlyphs">TradingView</text></g>
<text x="54.4" y="804.7" font-size="20.5" font-weight="bold" fill="#dcdcdc" stroke="#dcdcdc" stroke-width="0.8" textLength="120.3" lengthAdjust="spacingAndGlyphs">TradingView</text>
<text x="17" y="837.1" font-size="12.5" font-weight="bold" fill="#e6e6e6" text-anchor="middle" textLength="29" lengthAdjust="spacingAndGlyphs">12:00</text>
<text x="88.8" y="837.1" font-size="12.5" font-weight="bold" fill="#e6e6e6" text-anchor="middle" textLength="29" lengthAdjust="spacingAndGlyphs">15:00</text>
<text x="161" y="837.1" font-size="12.5" font-weight="bold" fill="#e6e6e6" text-anchor="middle" textLength="29" lengthAdjust="spacingAndGlyphs">18:00</text>
<text x="233" y="837.1" font-size="12.5" font-weight="bold" fill="#e6e6e6" text-anchor="middle" textLength="29" lengthAdjust="spacingAndGlyphs">21:00</text>
<text x="305" y="837.1" font-size="12.5" font-weight="bold" fill="#e6e6e6" text-anchor="middle">24</text>
<text x="376.7" y="837.1" font-size="12.5" font-weight="bold" fill="#e6e6e6" text-anchor="middle" textLength="29" lengthAdjust="spacingAndGlyphs">03:00</text>
<text x="431" y="837.1" font-size="12.5" font-weight="bold" fill="#e6e6e6" text-anchor="middle" textLength="29" lengthAdjust="spacingAndGlyphs">06:00</text>
<text x="503" y="837.1" font-size="12.5" font-weight="bold" fill="#e6e6e6" text-anchor="middle" textLength="29" lengthAdjust="spacingAndGlyphs">09:00</text>
<text x="575" y="837.1" font-size="12.5" font-weight="bold" fill="#e6e6e6" text-anchor="middle" textLength="29" lengthAdjust="spacingAndGlyphs">12:00</text>
<text x="647" y="837.1" font-size="12.5" font-weight="bold" fill="#e6e6e6" text-anchor="middle" textLength="29" lengthAdjust="spacingAndGlyphs">15:00</text>
<text x="719" y="837.1" font-size="12.5" font-weight="bold" fill="#e6e6e6" text-anchor="middle" textLength="29" lengthAdjust="spacingAndGlyphs">18:00</text>
<text x="791" y="837.1" font-size="12.5" font-weight="bold" fill="#e6e6e6" text-anchor="middle" textLength="29" lengthAdjust="spacingAndGlyphs">21:00</text>
<text x="863" y="837.1" font-size="12.5" font-weight="bold" fill="#e6e6e6" text-anchor="middle">25</text>
<text x="935" y="837.1" font-size="12.5" font-weight="bold" fill="#e6e6e6" text-anchor="middle" textLength="29" lengthAdjust="spacingAndGlyphs">03:00</text>
<text x="988.5" y="837.1" font-size="12.5" font-weight="bold" fill="#e6e6e6" text-anchor="middle" textLength="29" lengthAdjust="spacingAndGlyphs">06:00</text>
<text x="1060.5" y="837.1" font-size="12.5" font-weight="bold" fill="#e6e6e6" text-anchor="middle" textLength="29" lengthAdjust="spacingAndGlyphs">09:00</text>
<text x="1132.8" y="837.1" font-size="12.5" font-weight="bold" fill="#e6e6e6" text-anchor="middle" textLength="29" lengthAdjust="spacingAndGlyphs">12:00</text>
<text x="1204.8" y="837.1" font-size="12.5" font-weight="bold" fill="#e6e6e6" text-anchor="middle" textLength="29" lengthAdjust="spacingAndGlyphs">15:00</text>
<text x="1277" y="837.1" font-size="12.5" font-weight="bold" fill="#e6e6e6" text-anchor="middle" textLength="29" lengthAdjust="spacingAndGlyphs">18:00</text>
<text x="1349" y="837.1" font-size="12.5" font-weight="bold" fill="#e6e6e6" text-anchor="middle" textLength="29" lengthAdjust="spacingAndGlyphs">21:00</text>
<text x="1421" y="837.1" font-size="12.5" font-weight="bold" fill="#e6e6e6" text-anchor="middle">26</text>
<text x="1523" y="837.1" font-size="12.5" font-weight="bold" fill="#e6e6e6" text-anchor="middle">28</text>
<text x="1619" y="837.1" font-size="12.5" font-weight="bold" fill="#e6e6e6" text-anchor="middle" textLength="29" lengthAdjust="spacingAndGlyphs">09:00</text>
<text x="1691.5" y="837.1" font-size="12.5" font-weight="bold" fill="#e6e6e6" text-anchor="middle" textLength="29" lengthAdjust="spacingAndGlyphs">12:00</text>
<g fill="none" stroke="#dbdbdb" stroke-width="1.1"><polygon points="1783.5,827 1791.5,827 1795,833.3 1791.5,839.5 1783.5,839.5 1780,833.3"/><circle cx="1787.5" cy="833.3" r="2"/></g>
<rect x="0" y="42" width="5" height="843" fill="#2e2e2e"/>
<rect x="0" y="38" width="1" height="855" fill="#1c1c1c"/>
<rect x="1820" y="42" width="5" height="851" fill="#2e2e2e"/>
<text x="19.3" y="872.3" font-size="14" fill="#dbdbdb" stroke="#dbdbdb" stroke-width="0.25" textLength="15.4" lengthAdjust="spacingAndGlyphs">1D</text>
<text x="47" y="872.3" font-size="14" fill="#dbdbdb" stroke="#dbdbdb" stroke-width="0.25" textLength="15.7" lengthAdjust="spacingAndGlyphs">5D</text>
<text x="75.6" y="872.3" font-size="14" fill="#dbdbdb" stroke="#dbdbdb" stroke-width="0.25" textLength="17.0" lengthAdjust="spacingAndGlyphs">1M</text>
<text x="104.3" y="872.3" font-size="14" fill="#dbdbdb" stroke="#dbdbdb" stroke-width="0.25" textLength="17.2" lengthAdjust="spacingAndGlyphs">3M</text>
<text x="133.5" y="872.3" font-size="14" fill="#dbdbdb" stroke="#dbdbdb" stroke-width="0.25" textLength="17.5" lengthAdjust="spacingAndGlyphs">6M</text>
<text x="162.7" y="872.3" font-size="14" fill="#dbdbdb" stroke="#dbdbdb" stroke-width="0.25" textLength="24.5" lengthAdjust="spacingAndGlyphs">YTD</text>
<text x="199.8" y="872.3" font-size="14" fill="#dbdbdb" stroke="#dbdbdb" stroke-width="0.25" textLength="14.8" lengthAdjust="spacingAndGlyphs">1Y</text>
<text x="227" y="872.3" font-size="14" fill="#dbdbdb" stroke="#dbdbdb" stroke-width="0.25" textLength="14.8" lengthAdjust="spacingAndGlyphs">5Y</text>
<text x="254" y="872.3" font-size="14" fill="#dbdbdb" stroke="#dbdbdb" stroke-width="0.25" textLength="16.7" lengthAdjust="spacingAndGlyphs">All</text>
<line x1="281.5" y1="856" x2="281.5" y2="878" stroke="#3a3a3a" stroke-width="1"/>
<g fill="none" stroke="#dbdbdb" stroke-width="1.2"><path d="M296.5,866 V860 A1.5,1.5 0 0 1 298,858.5 H312 A1.5,1.5 0 0 1 313.5,860 V872 A1.5,1.5 0 0 1 312,873.5 H304"/><line x1="296.5" y1="862.5" x2="313.5" y2="862.5"/><line x1="301" y1="856" x2="301" y2="860"/><line x1="309" y1="856" x2="309" y2="860"/><path d="M295,869.5 H302 M299.5,867 L302,869.5 L299.5,872"/></g>
<text x="1810" y="872" font-size="13.5" fill="#dbdbdb" text-anchor="end">12:13:42 UTC+7</text>
</svg></body></html>
